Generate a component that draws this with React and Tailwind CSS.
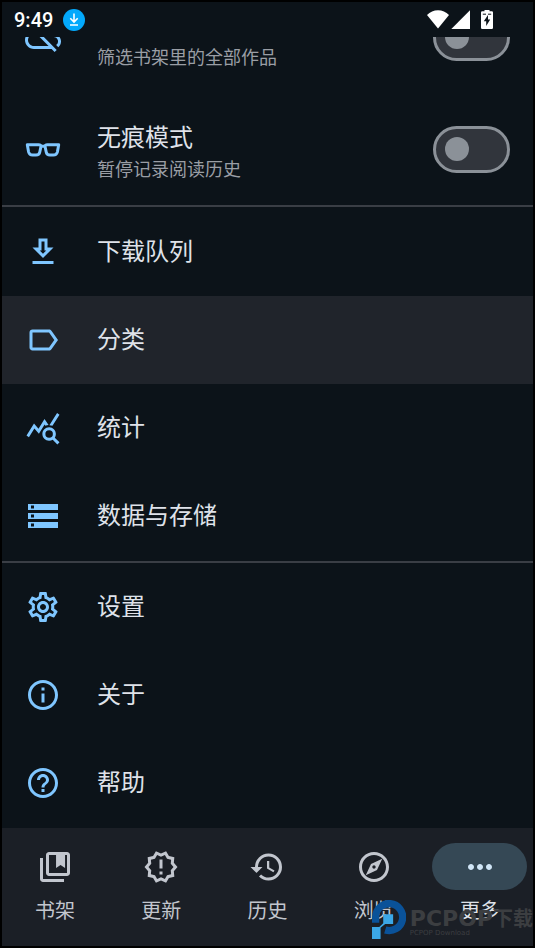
import React, { useState } from 'react';
import {
  MdOutlineCloudOff,
  MdOutlineGetApp,
  MdOutlineLabel,
  MdQueryStats,
  MdOutlineStorage,
  MdOutlineSettings,
  MdOutlineInfo,
  MdHelpOutline,
  MdOutlineNewReleases,
  MdHistory,
  MdOutlineExplore,
  MdMoreHoriz,
} from 'react-icons/md';

const GlassesIcon = ({ className }) => (
  <svg viewBox="0 0 36 36" className={className} fill="none" stroke="currentColor" strokeWidth="3" strokeLinejoin="round">
    <path d="M2.3 13.7H13.5Q16.3 13.7 15.8 16.3L14.8 21Q14.2 24.1 11 24.1H7.6Q4.4 24.1 3.6 21Z" />
    <path d="M33.7 13.7H22.5Q19.7 13.7 20.2 16.3L21.2 21Q21.8 24.1 25 24.1H28.4Q31.6 24.1 32.4 21Z" />
    <path d="M15 15.2H21" />
  </svg>
);

const LibraryIcon = ({ className }) => (
  <svg viewBox="0 0 24 24" className={className} fill="currentColor">
    <path d="M4 6H2v14c0 1.1.9 2 2 2h14v-2H4z" />
    <path fillRule="evenodd" d="M20 2H8c-1.1 0-2 .9-2 2v12c0 1.1.9 2 2 2h12c1.1 0 2-.9 2-2V4c0-1.1-.9-2-2-2zM8 4h12v12H8z" />
    <path d="M12.7 3h6v9.6l-3-1.9-3 1.9z" />
  </svg>
);

const libraryItems = [
  { icon: MdOutlineGetApp, title: '下载队列' },
  { icon: MdOutlineLabel, title: '分类', active: true },
  { icon: MdQueryStats, title: '统计' },
  { icon: MdOutlineStorage, title: '数据与存储' },
];

const appItems = [
  { icon: MdOutlineSettings, title: '设置' },
  { icon: MdOutlineInfo, title: '关于' },
  { icon: MdHelpOutline, title: '帮助' },
];

const tabs = [
  { icon: LibraryIcon, label: '书架' },
  { icon: MdOutlineNewReleases, label: '更新' },
  { icon: MdHistory, label: '历史' },
  { icon: MdOutlineExplore, label: '浏览' },
  { icon: MdMoreHoriz, label: '更多' },
];

const StatusBar = () => (
  <header className="flex h-[35px] shrink-0 items-center justify-between pl-3 pr-10 text-white">
    <div className="flex items-center gap-2.5">
      <span className="font-['Roboto',sans-serif] text-[20px] font-medium leading-6">9:49</span>
      <svg viewBox="0 0 22 22" className="h-[22px] w-[22px]">
        <circle cx="11" cy="11" r="11" fill="#03a9fc" />
        <path d="M11 4.5V12.5M7.3 9.3L11 13L14.7 9.3M7 16H15" fill="none" stroke="#fff" strokeWidth="1.6" />
      </svg>
    </div>
    <div className="flex items-center gap-0.5">
      <svg viewBox="0 0 22 20" className="h-5 w-[22px]" fill="currentColor">
        <path d="M11 18.5L0 5C3 2 6.8 0.3 11 0.3S19 2 22 5Z" />
      </svg>
      <svg viewBox="0 0 28 20" className="h-5 w-7" fill="currentColor">
        <path d="M19 0.3V19H0.3Z" />
      </svg>
      <svg viewBox="0 0 12 20" className="h-5 w-3" fill="currentColor">
        <path fillRule="evenodd" d="M3.5 0H8.5V1.3H10.8Q12 1.3 12 2.5V17.8Q12 19 10.8 19H1.2Q0 19 0 17.8V2.5Q0 1.3 1.2 1.3H3.5ZM7 5L2.8 11.3H5.2V16L9.2 9.6H7Z" />
        <path d="M1.8 4.2H5M7 4.2H10.2" stroke="#0c1319" strokeWidth="1" />
      </svg>
    </div>
  </header>
);

const SwitchRow = ({ id, icon: Icon, title, subtitle }) => {
  const [checked, setChecked] = useState(false);

  return (
    <div className="flex h-28 items-center gap-9 pl-[23px] pr-[23px]">
      <Icon className="h-9 w-9 shrink-0 text-[#7fc6ff]" />
      <label htmlFor={id} className="flex h-[66px] flex-1 flex-col justify-end">
        {title && <span className="text-[24px] leading-9 text-[#dfe2e9]">{title}</span>}
        <span className="text-[18px] leading-7 text-[#9a9ea5]">{subtitle}</span>
      </label>
      <input
        id={id}
        type="checkbox"
        role="switch"
        checked={checked}
        onChange={(e) => setChecked(e.target.checked)}
        className="flex h-[47px] w-[77px] shrink-0 appearance-none items-center rounded-full border-3 border-[#8b9198] bg-[#31353c] pl-[9px] before:h-6 before:w-6 before:rounded-full before:bg-[#8b9198] before:content-[''] checked:before:translate-x-7"
      />
    </div>
  );
};

const MenuRow = ({ icon: Icon, title, active }) => (
  <button
    type="button"
    className={`flex h-22 w-full items-center gap-9 pl-[23px] text-left ${active ? 'bg-[#20242b]' : ''}`}
  >
    <Icon className="h-9 w-9 shrink-0 text-[#7fc6ff]" />
    <span className="pb-1 text-[24px] leading-9 text-[#dfe2e9]">{title}</span>
  </button>
);

const Watermark = () => (
  <div className="pointer-events-none absolute bottom-[7px] right-0 flex items-end gap-1">
    <svg viewBox="0 0 103 118" className="h-[39px] w-[34px]">
      <path d="M11 69V52A41 41 0 1 1 40 91" fill="none" stroke="#0a5299" strokeWidth="22" />
      <path d="M34 43H64V73H40L26 84V118H0V82H22L34 70Z" fill="#3ba7e6" />
    </svg>
    <div className="flex flex-col whitespace-nowrap pb-0.5 font-['DejaVu_Sans','Noto_Sans_CJK_SC',sans-serif] text-[#3c3e41]">
      <span className="text-[22px] font-bold leading-5">
        PCPOP<span className="text-[20px]">下载</span>
      </span>
      <span className="text-[7px] leading-2">PCPOP Download</span>
    </div>
  </div>
);

const App = () => {
  const [current, setCurrent] = useState('更多');

  return (
    <div className="relative flex min-h-screen flex-col border-2 border-black bg-[#0c1319] font-['Noto_Sans_CJK_SC',sans-serif]">
      <StatusBar />

      <main className="flex-1 overflow-hidden">
        {/* List is scrolled halfway past its first row */}
        <div className="-mt-14">
          <SwitchRow id="downloaded-only" icon={MdOutlineCloudOff} subtitle="筛选书架里的全部作品" />
          <SwitchRow id="incognito" icon={GlassesIcon} title="无痕模式" subtitle="暂停记录阅读历史" />
          <div className="border-t-2 border-[#3a3e45] py-px">
            {libraryItems.map((item) => (
              <MenuRow key={item.title} {...item} />
            ))}
          </div>
          <div className="border-t-2 border-[#3a3e45] pb-px">
            {appItems.map((item) => (
              <MenuRow key={item.title} {...item} />
            ))}
          </div>
        </div>
      </main>

      <nav className="grid h-[118px] shrink-0 grid-cols-5 bg-[#1b1f26] pt-[15px]">
        {tabs.map(({ icon: Icon, label }) => {
          const selected = label === current;
          return (
            <button
              key={label}
              type="button"
              onClick={() => setCurrent(label)}
              className="flex flex-col items-center gap-2"
            >
              <span
                className={`flex h-[47px] w-[95px] items-center justify-center rounded-full ${
                  selected ? 'bg-[#354855] text-[#d0e5f6]' : 'text-[#c2c6ce]'
                }`}
              >
                <Icon className="h-9 w-9" />
              </span>
              <span className={`text-[20px] leading-6 ${selected ? 'text-[#dfe2e9]' : 'text-[#c2c6ce]'}`}>{label}</span>
            </button>
          );
        })}
      </nav>

      <Watermark />
    </div>
  );
};

export default App;
